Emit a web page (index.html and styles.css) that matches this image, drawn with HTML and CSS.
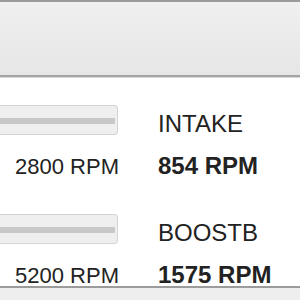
FILE: index.html
```html
<!DOCTYPE html>
<html>
<head>
<meta charset="utf-8">
<link rel="stylesheet" href="styles.css">
</head>
<body>
<div class="page">
  <div class="toolbar"></div>
  <div class="fans">
    <div class="fan">
      <div class="track"><div class="groove"></div></div>
      <div class="name">INTAKE</div>
      <div class="target">2800 RPM</div>
      <div class="current">854 RPM</div>
    </div>
    <div class="fan">
      <div class="track"><div class="groove"></div></div>
      <div class="name">BOOSTB</div>
      <div class="target">5200 RPM</div>
      <div class="current">1575 RPM</div>
    </div>
  </div>
  <div class="statusbar"></div>
</div>
</body>
</html>
```
FILE: styles.css
```css
html, body {
  margin: 0;
  padding: 0;
  background: #ffffff;
}
.page {
  width: 300px;
  height: 300px;
  overflow: hidden;
  display: flex;
  flex-direction: column;
  font-family: "Liberation Sans", Arial, sans-serif;
  color: #222222;
}
.toolbar {
  flex: none;
  height: 73px;
  border-top: 2px solid #9b9b9b;
  border-bottom: 2px solid #a4a4a4;
  background: linear-gradient(#f0f0f0, #e6e6e6);
  box-shadow: 0 1px 0 #d8d8d8;
}
.fans {
  flex: none;
  padding-top: 28px;
  display: flex;
  flex-direction: column;
  gap: 36px;
}
.fan {
  display: grid;
  grid-template-columns: 119px 1fr;
  grid-template-rows: 30px 24px;
  column-gap: 39px;
  row-gap: 19px;
  align-items: baseline;
}
.track {
  align-self: start;
  box-sizing: border-box;
  width: 118px;
  height: 30px;
  border: 1px solid #d4d4d4;
  border-left: none;
  border-radius: 0 4px 4px 0;
  background: #efefef;
}
.groove {
  margin-top: 12px;
  margin-right: 2px;
  height: 6px;
  background: #c8c8c8;
}
.name {
  align-self: start;
  font-size: 24px;
  line-height: 30px;
  padding-top: 4px;
}
.target {
  font-size: 22px;
  line-height: 24px;
  text-align: right;
}
.current {
  font-size: 24px;
  line-height: 24px;
  font-weight: bold;
}
.statusbar {
  flex: 1;
  margin-top: -1px;
  border-top: 2px solid #9b9b9b;
  background: #eeeeee;
}
```
